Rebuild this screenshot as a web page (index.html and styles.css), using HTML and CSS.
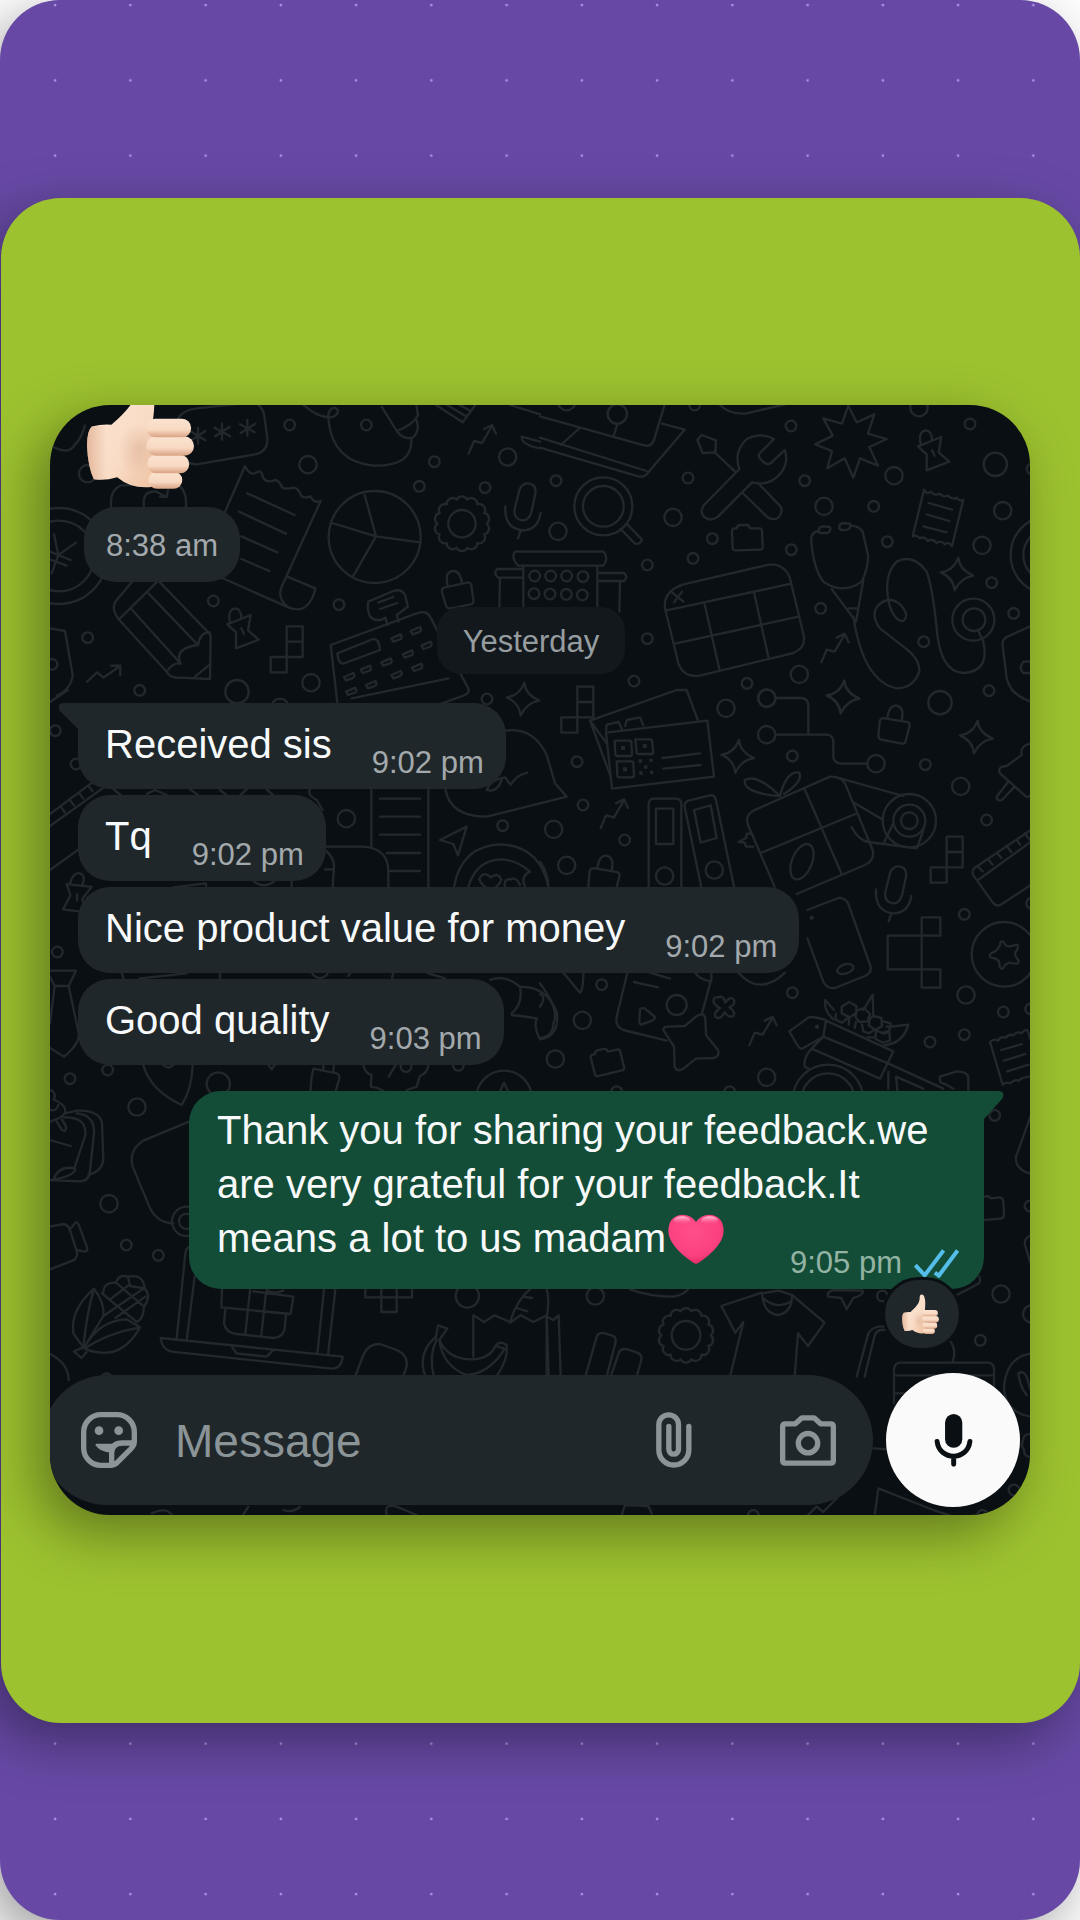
FILE: index.html
```
<!DOCTYPE html>
<html lang="en">
<head>
    <meta charset="UTF-8">
    <meta name="viewport" content="width=device-width, initial-scale=1.0">
    <title>Customer Feedback</title>
    <link rel="stylesheet" href="styles.css">
</head>
<body>
    <div class="stage">
        <!-- Dotted backdrop -->
        <svg class="dots" viewBox="0 0 1080 1920" preserveAspectRatio="xMidYMid slice" aria-hidden="true">
            <defs>
                <pattern id="dotsTop" x="17.5" y="-32.5" width="75.25" height="75.25" patternUnits="userSpaceOnUse"><circle cx="37.6" cy="37.6" r="1.3"/></pattern>
                <pattern id="dotsBottom" x="17.5" y="1706" width="75.25" height="75.25" patternUnits="userSpaceOnUse"><circle cx="37.6" cy="37.6" r="1.3"/></pattern>
            </defs>
            <rect x="40" width="1040" height="180" fill="url(#dotsTop)"/>
            <rect x="40" y="1724" width="1040" height="196" fill="url(#dotsBottom)"/>
        </svg>

        <div class="card">
            <main class="chat">
                <!-- Doodle wallpaper -->
                <svg class="wallpaper" viewBox="0 0 2940 3330" preserveAspectRatio="xMidYMid slice" aria-hidden="true">
                    <defs>
                        <circle id="s" r="16"/>
                        <circle id="m" r="26"/>
                        <circle id="l" r="35"/>
                        <path id="spark" d="M5-48 Q8-12 50 6 Q12 12 -6 50 Q-10 12 -48-4 Q-10-8 5-48Z"/>
                        <path id="trend" d="M-38 44 L-22 6 L2 12 L30-36 M8-30 L32-42 L44-16"/>
                        <path id="lock" d="M-34-14 L38-30 Q46-30 48-22 L54 24 Q56 34 46 36 L-14 48 Q-24 50 -28 40 L-40 0 Q-42-10 -34-14Z M-22-18 Q-34-60 -8-64 Q14-66 20-28"/>
                        <path id="pin" d="M-46-18 L24-46 L16 0 L48 28 L-20 54 L-20 6Z M-38-24 Q-46-64 -22-66 Q-4-64 -4-36 M-4-6 L4 10"/>
                        <path id="pixels" d="M0-70 h48 v92 h-48z M0-24 h48 M-48 22 h48 v46 h-48z"/>
                        <path id="gear" d="M74 0 A18 18 0 0 1 67 32 A18 18 0 0 1 46 58 A18 18 0 0 1 16 72 A18 18 0 0 1 -16 72 A18 18 0 0 1 -46 58 A18 18 0 0 1 -67 32 A18 18 0 0 1 -74 0 A18 18 0 0 1 -67 -32 A18 18 0 0 1 -46 -58 A18 18 0 0 1 -16 -72 A18 18 0 0 1 16 -72 A18 18 0 0 1 46 -58 A18 18 0 0 1 67 -32 A18 18 0 0 1 74 0Z"/>
                        <path id="folder" d="M-44-22 q0-8 8-8 h6 q2-10 10-10 h20 q8 0 10 10 h28 q8 0 8 8 l2 48 q0 8 -8 8 l-74 2 q-8 0-8-8z"/>
                        <path id="mic" d="M-6-78 Q6-96 24-92 Q44-86 40-62 L28-6 Q20 20 0 18 Q-26 14 -22-16 L-10-64Q-8-72 -6-78Z M-50-24 Q-54 44 4 48 Q48 46 56-4 M-4 48 L-12 72"/>
                    </defs>

                    <!-- top left -->
                    <g transform="translate(-30 -30)">
                        <use href="#s" x="749" y="90"/><use href="#s" x="979" y="90"/><use href="#s" x="1183" y="200"/><use href="#s" x="1138" y="274"/><use href="#s" x="1335" y="278"/>
                        <use href="#s" x="520" y="618"/><use href="#s" x="897" y="629"/><use href="#s" x="143" y="728"/><use href="#s" x="299" y="886"/><use href="#s" x="36" y="808"/>
                        <use href="#m" x="804" y="209"/><use href="#m" x="1403" y="186"/><use href="#m" x="813" y="863"/><use href="#m" x="143" y="236"/><use href="#l" x="591" y="890"/>
                        <path d="M30 150 Q80 180 100 155 Q125 130 135 92"/>
                        <path d="M412 75 Q425 45 470 40 L640 22 Q670 30 674 70 L682 130 Q684 170 645 178 L470 208 Q430 206 420 170Z"/>
                        <path d="M474 98 v48 M454 110 l42 26 M496 108 l-42 28 M546 86 v48 M524 98 l46 26 M568 96 l-42 28 M622 74 v48 M600 88 l44 24 M646 86 l-44 28"/>
                        <path d="M215 345 Q205 290 240 272 L400 262 Q445 280 437 340 M312 338 Q305 285 350 290 L378 305 M360 305 L380 306 L384 286"/>
                        <circle cx="57" cy="483" r="144"/><circle cx="57" cy="483" r="106"/>
                        <path d="M42 418 L55 480 L108 443 M55 480 L35 535 M30 470 L92 495 M20 490 L80 512"/>
                        <path d="M615 213 L490 500 Q480 525 560 555 L745 637 Q800 660 822 595 L826 580 L742 545 M615 213 Q630 245 650 232 Q665 222 668 245 Q680 268 706 254 Q722 262 726 278 Q745 284 760 278 Q775 278 784 304 Q800 310 812 304 Q820 325 842 318 L725 575 Q710 610 745 637"/>
                        <path d="M622 295 L764 360 M597 350 L738 416 M604 424 L712 472 M604 492 L688 528"/>
                        <circle cx="1004" cy="426" r="138"/><path d="M974 300 L1008 424 L1140 442 M1008 424 L938 546 M1008 424 L876 384"/>
                        <use href="#gear" x="1266" y="386"/><circle cx="1266" cy="386" r="41"/>
                        <use href="#mic" x="1446" y="358"/>
                        <use href="#trend" x="1324" y="132"/><use href="#trend" transform="translate(194 836) rotate(25)"/>
                        <path d="M785 25 Q840 75 880 65 Q905 50 885 38 Q860 40 866 80 Q880 200 1000 212 Q1120 215 1114 130"/>
                        <path d="M1025 35 L1070 108 Q1120 90 1134 60 L1128 25 M1070 108 Q1090 135 1118 128 Q1140 110 1130 76"/>
                        <path d="M1185 28 L1268 82 L1306 30 M1218 28 L1278 64 M1250 25 L1292 48 M1410 30 L1500 58 M1445 125 L1500 140 M1445 125 Q1445 150 1500 160"/>
                        <use href="#lock" x="1246" y="592"/>
                        <path d="M275 562 L230 615 Q210 640 238 675 L380 830 Q390 850 420 848 L510 852 L512 720 L360 562 M238 672 L352 560 M272 640 L422 806 M326 596 L474 750 M380 830 Q400 800 422 806 Q400 760 474 750 Q480 710 510 712 M466 844 L510 808"/>
                        <use href="#pin" x="608" y="706"/><use href="#pixels" x="740" y="764"/>
                        <path d="M30 700 L75 708 L98 840 Q95 880 50 902"/>
                        <path d="M872 750 L1130 655 Q1160 645 1170 665 L1285 880 Q1290 895 1270 902 L905 1035 Z M892 775 L1000 732 Q1018 732 1020 765 L910 806 Q896 808 892 775Z M935 910 L1226 850 M985 620 L1060 588 Q1085 580 1095 600 L1104 635 L1070 660 L1076 680 M985 620 Q980 640 990 665 Q1010 685 1036 668 L1042 690 M1015 622 L1060 606 M1020 642 L1072 624"/>
                        <path d="M1054 730 l28-12 q8 12 -4 16 l-18 6zM1112 708 l28-12 q8 12 -4 16 l-18 6zM1144 752 l28-12 q8 12 -4 16 l-18 6zM1088 778 l28-12 q8 12 -4 16 l-18 6zM1024 802 l28-12 q8 12 -4 16 l-18 6zM962 824 l28-12 q8 12 -4 16 l-18 6zM912 846 l28-12 q8 12 -4 16 l-18 6zM1116 818 l28-12 q8 12 -4 16 l-18 6zM1054 840 l28-12 q8 12 -4 16 l-18 6zM978 870 l28-12 q8 12 -4 16 l-18 6zM918 890 l28-12 q8 12 -4 16 l-18 6z"/>
                        <path d="M1425 470 H1690 Q1708 488 1690 512 H1435 Q1412 490 1425 470Z M1450 512 V640 M1672 512 V640 M1446 522 H1372 Q1358 535 1375 548 H1446 M1380 548 L1378 640 M1676 534 H1752 Q1766 545 1752 558 H1676 M1740 558 L1738 650"/>
                        <use href="#s" x="1484" y="543"/><use href="#s" x="1532" y="543"/><use href="#s" x="1580" y="543"/><use href="#s" x="1629" y="545"/>
                        <use href="#s" x="1482" y="596"/><use href="#s" x="1530" y="597"/><use href="#s" x="1579" y="598"/><use href="#s" x="1627" y="600"/>
                    </g>

                    <!-- top right -->
                    <g transform="translate(1470 -30)">
                        <use href="#s" x="464" y="30"/><use href="#s" x="753" y="93"/><use href="#s" x="444" y="249"/><use href="#s" x="48" y="257"/><use href="#s" x="794" y="257"/>
                        <use href="#s" x="1290" y="87"/><use href="#s" x="517" y="431"/><use href="#s" x="1001" y="334"/><use href="#s" x="754" y="464"/><use href="#s" x="1042" y="440"/>
                        <use href="#s" x="459" y="490"/><use href="#s" x="322" y="510"/><use href="#s" x="1355" y="563"/><use href="#s" x="842" y="640"/><use href="#s" x="1421" y="655"/>
                        <use href="#s" x="322" y="731"/><use href="#s" x="1151" y="740"/><use href="#s" x="282" y="858"/><use href="#s" x="621" y="865"/><use href="#s" x="1347" y="887"/><use href="#s" x="1476" y="222"/>
                        <use href="#m" x="54" y="409"/><use href="#m" x="399" y="367"/><use href="#m" x="852" y="334"/><use href="#m" x="1062" y="242"/><use href="#m" x="1388" y="347"/>
                        <use href="#m" x="1326" y="451"/><use href="#m" x="778" y="838"/><use href="#m" x="1137" y="38"/><use href="#m" x="80" y="20"/><use href="#m" x="681" y="910"/>
                        <use href="#l" x="1366" y="208"/>
                        <path d="M0 64 L315 152 Q335 155 342 135 L375 25 M0 128 L320 228 M0 158 L295 244 Q315 248 325 232 L434 104 L366 86 M62 150 L118 100 M232 88 L222 120"/>
                        <circle cx="232" cy="57" r="29"/>
                        <path d="M540 30 Q570 60 620 55 L735 28"/>
                        <circle cx="190" cy="334" r="87"/><circle cx="190" cy="334" r="61"/><path d="M242 402 L285 446 Q300 450 306 434 L262 388"/>
                        <path d="M472 135 L485 120 L528 136 L526 172 L488 174Z M526 174 L588 232"/>
                        <path d="M702 132 Q660 110 620 132 Q580 170 598 222 L492 330 Q478 350 492 365 Q510 382 534 365 L636 262 Q690 275 722 235 Q748 200 734 165 L692 205 Q680 210 672 202 Q650 186 660 174Z M654 264 L722 335 Q730 352 715 368 Q698 378 682 366 L608 294"/>
                        <path d="M925 32 L950 82 L1003 58 L984 116 L1040 132 L988 156 L1014 212 L960 190 L940 248 L914 190 L862 220 L876 168 L826 148 L878 122 L850 70 L906 86Z"/>
                        <use href="#pin" x="1180" y="172"/><use href="#folder" x="620" y="430"/>
                        <path d="M1152 284 Q1160 300 1172 290 Q1184 304 1198 296 Q1210 308 1224 302 Q1238 316 1250 308 Q1260 322 1270 314 L1236 454 Q1226 438 1214 448 Q1202 434 1190 444 Q1176 428 1164 438 Q1152 422 1140 430 Q1128 418 1118 424Z M1166 324 L1236 344 M1160 358 L1228 378 M1150 394 L1220 412"/>
                        <path d="M430 568 L690 508 Q735 508 750 550 L792 725 Q795 760 760 774 L480 842 Q430 848 415 805 L375 640 Q368 590 430 568Z M380 646 L754 566 M405 746 L775 665 M494 628 L538 822 M642 592 L686 790 M398 594 l32 26 M426 590 l-24 32"/>
                        <path d="M836 404 Q838 394 850 394 L870 396 Q874 410 862 414 L842 414 Q834 412 836 404Z M898 392 Q902 384 914 384 L930 386 Q934 400 922 404 L906 406 Q896 402 898 392Z"/>
                        <path d="M836 408 Q810 412 814 440 Q820 520 850 560 Q910 600 965 560 Q985 520 984 480 L968 410 Q958 394 934 392 M875 582 L948 680 L970 555 M926 640 L950 640 M940 665 Q970 860 1070 880 Q1120 880 1138 830 Q1140 790 1090 755 L1020 700 Q990 660 1015 630 Q1050 600 1082 630 Q1110 660 1090 678 Q1060 678 1046 620 Q1030 540 1070 500 Q1120 475 1160 530 Q1178 580 1190 700 Q1200 830 1270 834 Q1350 830 1330 740 L1314 706"/>
                        <circle cx="1300" cy="674" r="63"/><circle cx="1302" cy="674" r="34"/>
                        <use href="#spark" x="1250" y="536"/><use href="#trend" x="882" y="758"/><use href="#spark" x="908" y="905"/>
                        <circle cx="1530" cy="480" r="118"/><circle cx="1530" cy="480" r="80"/>
                        <path d="M1480 690 L1400 726 Q1385 735 1388 752 L1400 850 Q1410 890 1450 910 M1480 800 H1450 Q1434 818 1450 834 H1480"/>
                    </g>

                    <!-- middle left -->
                    <g transform="translate(-30 855)">
                        <use href="#s" x="1341" y="27"/><use href="#s" x="46" y="122"/><use href="#s" x="1388" y="407"/><use href="#s" x="52" y="786"/><use href="#s" x="90" y="1166"/><use href="#s" x="203" y="1140"/><use href="#s" x="108" y="222"/><use href="#s" x="1255" y="1126"/>
                        <use href="#m" x="919" y="386"/><use href="#m" x="720" y="52"/><use href="#m" x="840" y="838"/><use href="#l" x="535" y="1182"/>
                        <use href="#spark" x="1448" y="26"/>
                        <path d="M30 36 L84 0 M30 372 L160 275 M30 408 L195 290 M62 350 l12 16 M90 330 l12 16 M118 310 l12 16 M146 288 l12 16 M30 540 L120 475"/>
                        <use href="#pin" transform="translate(112 620) rotate(28)"/>
                        <path d="M30 842 H108 L86 888 H44 L30 860 M44 888 L30 1000 M86 888 L116 1030 Q120 1060 72 1100 L30 1074"/>
                        <path d="M220 297 L260 330 M320 312 L345 300 L380 315 M450 297 L480 320 M540 300 L560 316 M600 316 L620 298 M680 298 L710 325"/>
                        <path d="M810 297 Q800 315 830 330 L848 360 M994 297 V470 M1165 297 V590 M1020 326 H1140 M1020 380 H1140 M1020 434 H1140 M1040 489 H1140 M1045 543 H1140"/>
                        <path d="M855 470 H970 Q1045 475 1045 545 V590 M855 480 Q882 500 882 530 L878 590 M855 538 H880 M755 590 V560 M400 592 L498 580 V592 M640 572 Q670 600 705 572"/>
                        <path d="M1200 450 L1280 410 L1254 496 L1240 462Z"/>
                        <path d="M1395 122 Q1480 110 1520 195 L1545 280 L1580 320 L1340 380 Q1230 380 1216 297 M1340 300 Q1350 270 1395 262 L1412 284 Q1430 255 1462 248 M1340 300 Q1370 310 1385 270"/>
                        <path d="M1242 590 Q1265 465 1385 463 Q1500 470 1525 590 M1285 590 Q1310 508 1385 508 Q1430 510 1470 545 Q1440 560 1455 590 M1318 568 Q1330 540 1352 562 Q1375 545 1384 570 Q1375 590 1355 600 Q1325 590 1318 568 M1395 590 Q1390 566 1412 568 Q1430 560 1440 585"/>
                        <path d="M245 848 L250 865 M300 865 L440 850 M540 848 V865 M925 858 L930 850 M1060 848 L1056 865 M1165 850 L1215 865"/>
                        <path d="M1350 870 Q1395 852 1440 890 Q1520 890 1550 965 Q1560 1040 1500 1048 Q1480 1010 1490 985 Q1460 980 1415 975 M1440 890 Q1450 940 1415 970"/>
                        <path d="M310 1125 Q330 1200 425 1245 Q455 1200 458 1125 M370 1125 Q385 1140 400 1125 M685 1125 L695 1138 L704 1125"/>
                        <path d="M820 1136 L890 1150 Q900 1155 898 1166 L885 1210 M820 1136 Q810 1180 812 1220 M850 1125 V1138 M882 1125 L880 1144"/>
                        <path d="M970 1125 Q975 1150 995 1155 L992 1190 Q1030 1195 1040 1215 M1165 1125 Q1162 1150 1140 1158 L1130 1190 L1100 1200 M1046 1160 L1070 1120"/><use href="#s" x="1098" y="1130"/>
                        <circle cx="1392" cy="1226" r="84"/><path d="M1370 1225 L1392 1178 L1415 1225"/>
                    </g>

                    <!-- middle right -->
                    <g transform="translate(1470 855)">
                        <use href="#s" x="111" y="215"/><use href="#s" x="757" y="198"/><use href="#s" x="1156" y="224"/><use href="#s" x="129" y="345"/><use href="#s" x="254" y="450"/><use href="#s" x="1340" y="390"/>
                        <use href="#s" x="1273" y="673"/><use href="#s" x="185" y="884"/><use href="#s" x="757" y="908"/><use href="#s" x="1390" y="966"/><use href="#s" x="1273" y="1034"/><use href="#s" x="1170" y="1056"/><use href="#s" x="230" y="1205"/><use href="#s" x="569" y="1205"/><use href="#s" x="1472" y="957"/><use href="#s" x="1475" y="640"/>
                        <use href="#m" x="558" y="55"/><use href="#m" x="1262" y="289"/><use href="#m" x="41" y="418"/><use href="#m" x="80" y="526"/><use href="#m" x="1278" y="915"/><use href="#m" x="127" y="991"/><use href="#m" x="46" y="1107"/><use href="#m" x="680" y="1162"/><use href="#l" x="1200" y="38"/>
                        <use href="#pixels" x="112" y="60"/>
                        <path d="M200 160 L150 92 L410 0 L440 0 L474 92 M150 92 L212 260"/>
                        <path d="M198 128 L502 92 L522 260 L216 296Z"/>
                        <path d="M224 152 h44 q6 0 6 6 l2 34 q0 6-6 6 h-38 q-6 0-6-6z M286 148 h44 q6 0 6 6 l4 32 q0 6-6 6 h-38 q-6 0-6-6z M230 214 h44 q6 0 6 6 l2 36 q0 6-6 6 h-38 q-6 0-6-6z M198 122 L200 104 L236 96 L246 118 M256 108 L260 90 L300 82 L310 106 M368 204 L480 190 M370 236 L482 225"/>
                        <path class="solid" d="M243 168 h12 v12 h-12z M308 162 h12 v12 h-12z M249 232 h12 v12 h-12z M296 208 h10 v10 h-10z M328 206 h10 v10 h-10z M312 226 h10 v10 h-10z M298 244 h10 v10 h-10z M330 242 h10 v10 h-10z"/>
                        <use href="#spark" x="592" y="198"/><use href="#spark" x="1308" y="140"/><use href="#spark" x="908" y="20"/>
                        <use href="#m" x="680" y="24"/><use href="#m" x="680" y="134"/><use href="#m" x="1008" y="221"/>
                        <path d="M706 24 H785 Q805 26 805 48 V132 M706 134 H860 Q880 136 880 156 V200 Q882 220 905 221 H982"/>
                        <use href="#lock" transform="translate(1056 110) rotate(22)"/><use href="#lock" transform="translate(186 560) rotate(22)"/>
                        <use href="#trend" x="220" y="370"/><use href="#trend" x="666" y="1022"/>
                        <path d="M326 592 V340 Q328 326 342 326 H410 Q424 328 424 342 V592 M348 356 H400 V462 H348Z M484 592 L434 350 Q432 336 446 332 L510 316 Q524 314 528 330 L582 590 M462 360 L512 346 L530 444 L482 458Z"/>
                        <use href="#m" x="374" y="558"/><use href="#m" x="523" y="540"/>
                        <path d="M720 318 Q610 310 614 270 Q650 250 720 318 Q740 240 778 248 Q790 275 732 312"/>
                        <path d="M640 362 L870 260 Q900 258 915 280 L998 480 Q1005 510 975 525 L770 612 M704 590 L624 405 Q615 375 640 362 M794 298 L904 550 M664 488 L946 372 M632 430 L620 432 L618 444 L596 456 L614 458 L618 470 L640 470"/>
                        <ellipse cx="786" cy="515" rx="30" ry="56" transform="rotate(22 786 515)"/>
                        <circle cx="1108" cy="392" r="80"/><circle cx="1108" cy="392" r="48"/><circle cx="1108" cy="392" r="25"/>
                        <path d="M890 262 L1090 318 M945 340 L1030 390 M935 412 Q955 450 985 456 L1130 475 M1060 400 L1032 458 M1150 420 L1132 472"/>
                        <use href="#mic" x="1058" y="622"/><use href="#pixels" x="1220" y="510"/>
                        <path d="M1145 682 H1201 V737 H1145Z M1145 737 H1043 V838 H1145Z M1145 838 H1201 V893 H1145Z"/>
                        <path d="M802 660 L895 624 Q915 622 925 642 L992 830 Q995 850 975 858 L885 894 Q862 898 850 875 L802 745"/><ellipse cx="916" cy="837" rx="25" ry="14" transform="rotate(-18 916 837)"/><circle cx="815" cy="683" r="3"/>
                        <circle cx="1392" cy="793" r="97"/><path d="M1382 756 Q1390 750 1396 764 Q1400 774 1430 764 Q1438 766 1430 782 Q1418 792 1436 812 Q1438 824 1420 820 Q1400 812 1388 836 Q1378 838 1378 818 Q1376 806 1352 802 Q1344 794 1358 788 Q1378 780 1382 756Z"/>
                        <path d="M1480 415 L1302 535 Q1295 545 1300 556 L1360 640 Q1372 652 1386 642 L1480 580 M1314 570 L1480 450 M1314 530 l14 14 M1344 508 l14 16 M1372 490 l12 14 M1400 468 l14 18 M1430 450 l10 14 M1454 430 l14 18"/>
                        <path d="M1475 160 Q1440 165 1445 195 L1400 228 Q1370 230 1380 250 L1456 318 Q1465 325 1475 312 M1404 276 L1370 320 Q1370 335 1386 330 L1424 290 M1415 0 Q1440 25 1480 38"/>
                        <path d="M0 515 Q25 550 25 592 M70 848 L120 908 Q130 900 130 848 M0 880 Q60 960 40 1000 Q40 1040 0 1044 M0 950 Q20 920 0 912"/>
                        <path d="M595 848 Q660 920 735 848"/>
                        <path d="M262 848 L230 980 Q225 1010 250 1020 L380 1052 M465 848 Q480 870 512 874 L486 970 M514 848 V872 M330 848 L390 866 M282 876 L354 892 M300 958 Q310 950 320 960 L344 980 Q346 988 336 992 L304 1004 Q296 1000 298 990Z"/><circle cx="410" cy="945" r="30"/>
                        <path d="M370 1020 Q370 1008 390 1010 L434 1008 L470 978 Q490 965 496 985 L498 1035 L534 1080 Q540 1100 520 1104 L468 1106 L430 1136 Q410 1148 404 1130 L402 1070Z"/>
                        <path d="M535 922 Q550 915 556 938 Q570 916 582 930 Q586 945 568 952 Q588 966 580 978 Q564 984 554 966 Q542 990 528 982 Q518 970 540 954 Q515 940 522 926 Q528 920 535 922Z"/>
                        <use href="#folder" transform="translate(200 1116) rotate(-12)"/>
                        <path d="M748 1024 L806 982 Q815 978 858 990 L850 1040 L786 1076Q778 1076 770 1062Z M858 992 L1060 1084 L1020 1166 L815 1076 L850 1040 L1044 1120 M815 1076 Q790 1100 794 1130 L806 1136 M1044 1120 L1210 1196 M1068 1160 L1072 1200 M1068 1160 L1150 1196 M1045 1146 V1196"/>
                        <path d="M880 988 Q850 960 856 930 L882 960 M970 960 L998 914 L1000 975 M1040 1010 Q1060 1010 1105 1004 Q1090 1060 1032 1066"/>
                        <path d="M905 950 l22-14 22 12 v20 l-20 14 -24-12z M950 962 l22-8 18 18 -8 22 -24 2 -12-16z M888 972 l-2 16 20 10 18-14 M928 986 l-2 18 M948 996 l-4 18 M1000 978 l24 6 2 24 -20 12 -20-14 4-20z M1030 994 l22 6 -4 22 -22 8 M1008 1022 l24 8 16-4 2 26 -22 6 -22-12z M966 1004 l4 20 18 6 16-12 M1000 1042 l-18 0"/>
                        <circle cx="864" cy="1230" r="106"/><circle cx="864" cy="1230" r="80"/><circle cx="831" cy="1010" r="3"/>
                        <path d="M1350 1056 Q1362 1044 1374 1052 Q1384 1036 1396 1044 Q1408 1030 1420 1036 Q1432 1022 1444 1030 Q1456 1018 1462 1020 L1475 1060 M1350 1056 L1388 1184 Q1400 1174 1410 1180 Q1424 1166 1436 1172 Q1448 1160 1475 1160 M1384 1080 L1446 1062 M1392 1112 L1456 1092 M1402 1144 L1466 1124"/>
                        <path d="M1200 1160 L1250 1144 Q1285 1145 1285 1165 V1200 M1200 1160 Q1195 1180 1215 1182 L1240 1196"/>
                    </g>

                    <!-- lower left -->
                    <g transform="translate(-30 2025)">
                        <use href="#s" x="259" y="495"/><use href="#s" x="355" y="526"/><use href="#m" x="291" y="81"/><use href="#m" x="207" y="371"/><use href="#l" x="1282" y="648"/><use href="#s" x="200" y="896"/>
                        <path d="M30 30 Q50 35 42 60 Q60 65 72 80 Q85 100 55 115 L30 125 M30 90 Q50 95 55 75 M75 100 L110 92 Q180 90 186 130 L190 240 Q185 275 145 284 M72 112 Q140 110 136 165 L104 262 M110 100 Q165 105 162 160 L150 270 Q150 302 120 304 L30 300 M40 300 Q55 255 105 265 Q110 285 40 300 M50 125 L66 150 Q78 158 78 140 L66 118 M30 180 L92 198"/>
                        <path d="M449 124 L310 182 Q265 210 278 260 L328 380 Q350 428 400 430"/><circle cx="440" cy="424" r="44"/><circle cx="440" cy="424" r="23"/>
                        <path d="M30 440 L70 432 Q85 435 90 450 L112 520 Q110 540 90 545 L30 568 M88 450 L106 428 Q112 425 116 434 L142 505 Q142 515 132 515 L112 510"/>
                        <path d="M162 626 Q90 690 100 760 L130 802 Q140 700 162 626 Q195 670 190 708 L134 800 Q180 720 260 718 L300 742 Q200 760 134 806 Q240 850 300 742 M130 802 L102 814 L124 834 L140 816"/>
                        <path d="M190 640 Q190 605 228 608 Q236 582 264 590 Q310 580 314 625 Q335 650 312 680 Q310 720 290 726 M186 640 L290 726 M228 608 L312 680 M264 590 L270 618 L314 625 M190 708 L312 625 M226 714 L316 650 M208 660 L270 612"/>
                        <path d="M30 822 Q85 850 86 900"/>
                        <path d="M449 500 Q438 505 436 520 L410 776 M464 590 L440 780 M362 774 L908 830 Q905 866 875 866 L395 815 Q365 808 362 774Z M852 628 L832 822 M886 628 L864 826 M574 798 L590 820 L680 830 L698 812"/>
                        <path d="M546 630 L544 682 L752 702 L760 650 L640 634 M630 630 L616 762 M678 636 L664 766 M556 686 L552 730 Q558 760 590 762 L700 774 Q730 772 734 745 L738 704 M680 630 Q700 645 730 632"/>
                        <path d="M976 628 V652 H1116 V628 M1024 628 V696 H1070 V628"/>
                        <path d="M1470 628 Q1430 660 1410 726 L1364 706 L1332 726 L1300 706 V830 M1410 728 L1442 706 L1480 726 L1520 706 V890 M1450 650 L1476 654 M1430 684 L1462 694"/>
                        <path d="M946 888 L970 825 Q985 790 1020 792 L1070 810 Q1105 825 1100 860 L1090 888"/>
                        <path d="M1188 770 L1194 736 L1222 746 L1198 780 Q1225 840 1300 838 Q1350 835 1366 798 Q1380 780 1400 795 Q1405 840 1370 888 M1188 770 Q1130 820 1156 890 M1190 778 Q1165 830 1182 890 M1198 782 Q1210 860 1280 885 Q1350 880 1394 806 L1366 798"/>
                    </g>

                    <!-- lower right -->
                    <g transform="translate(1470 2025)">
                        <use href="#s" x="1364" y="106"/><use href="#s" x="1027" y="648"/><use href="#s" x="1321" y="781"/><use href="#m" x="166" y="648"/><use href="#m" x="1383" y="642"/><use href="#s" x="1470" y="378"/><use href="#m" x="1475" y="702"/>
                        <use href="#gear" x="438" y="766"/><circle cx="438" cy="766" r="43"/>
                        <path d="M544 678 L666 638 Q670 700 712 705 Q756 700 756 645 L854 728 L804 798 L774 760 L764 890 M544 678 L586 758 L610 726 L570 890 M666 640 L716 632 L756 645 M670 655 Q710 690 752 665"/>
                        <path d="M136 890 L170 770 Q178 755 195 760 L220 768 Q230 775 226 790 L200 890 M212 890 L238 815 Q246 804 262 808 L292 818 Q308 825 304 840 L290 890"/>
                        <path d="M20 628 Q30 660 20 710 L40 720 L56 706 L62 890 M20 710 L26 890 M270 628 Q330 650 400 650 Q430 645 444 628"/>
                        <path d="M864 650 Q860 635 880 630 L968 632 Q972 645 940 654 L920 688 L904 654Z"/>
                        <path d="M1035 740 Q1000 735 985 760 L950 890 M1035 750 Q1010 745 1003 770 L974 890 M1232 785 Q1250 810 1238 846 M1250 645 L1310 614 Q1325 608 1318 590"/>
                        <path d="M1062 885 V865 Q1065 848 1082 848 H1345 Q1362 850 1362 868 V960 M1062 885 V970 M1064 886 H1362 M1064 940 H1100"/>
                        <path d="M1475 820 Q1400 830 1392 920 Q1395 1000 1475 1010 M1435 880 Q1450 870 1460 890 L1475 940 M1435 880 Q1440 920 1460 945"/>
                        <path d="M1334 350 L1345 348 L1352 355 L1380 352 Q1390 355 1390 366 L1392 405 Q1390 416 1380 416 L1334 420 M1475 100 L1428 230 Q1425 270 1475 282 M1475 465 Q1450 475 1455 495 L1475 560"/>
                        <path d="M1005 1300 L1015 1225 L1180 1290 L1240 1310 M805 1304 L830 1280 L850 1296 L895 1250 M1000 1105 L1040 1108"/><use href="#s" x="1422" y="1230"/><use href="#s" x="640" y="1306"/><use href="#s" x="1328" y="1306"/>
                        <path d="M1475 1062 Q1450 1060 1450 1080 Q1440 1095 1452 1108 Q1450 1130 1475 1132"/>
                        <path d="M-1165 1300 Q-1120 1280 -1105 1305 M-890 1304 L-875 1280 M-770 1290 Q-740 1300 -720 1280 M-460 1304 Q-470 1270 -430 1280 L-370 1305 M245 1305 L255 1275 L325 1278 L335 1300"/>
                    </g>
                </svg>

                <!-- Shared thumbs up drawing -->
                <svg class="defs" width="0" height="0" aria-hidden="true">
                    <defs>
                        <linearGradient id="skin" x1="0" y1="0" x2="1" y2="1">
                            <stop offset="0" stop-color="#fbe6d6"/>
                            <stop offset=".6" stop-color="#f9dcc6"/>
                            <stop offset="1" stop-color="#edbd9b"/>
                        </linearGradient>
                        <linearGradient id="finger" x1="0" y1="0" x2="0" y2="1">
                            <stop offset="0" stop-color="#fbe3d0"/>
                            <stop offset=".6" stop-color="#f8d9c2"/>
                            <stop offset="1" stop-color="#d9a283"/>
                        </linearGradient>
                        <radialGradient id="palm" cx=".5" cy=".5" r=".5">
                            <stop offset="0" stop-color="#d9ab90" stop-opacity=".5"/>
                            <stop offset="1" stop-color="#d9ab90" stop-opacity="0"/>
                        </radialGradient>
                        <linearGradient id="wrist" x1="0" y1="0" x2="1" y2="0">
                            <stop offset="0" stop-color="#d69d7c"/>
                            <stop offset="1" stop-color="#d69d7c" stop-opacity="0"/>
                        </linearGradient>
                        <symbol id="thumb" viewBox="0 0 110 120">
                            <path fill="url(#skin)" d="M53 5 Q58-2 64 4 Q72 16 68 48 L78 60 V104 L66 118 Q45 120 31 108 Q18 112 7 110 Q1 98 0 76 Q0 60 5 56 Q16 53 25 54 Q42 40 49 27 Q53 18 53 5Z"/>
                            <path fill="url(#wrist)" d="M5 56 Q0 60 0 76 Q1 98 7 110 L20 110 V55Z" opacity=".6"/>
                            <ellipse cx="53" cy="80" rx="21" ry="27" fill="url(#palm)"/>
                            <g fill="url(#finger)">
                                <rect x="63" y="102" width="35" height="18" rx="9"/>
                                <rect x="62" y="85" width="43" height="19" rx="9"/>
                                <rect x="61" y="66" width="49" height="20" rx="10"/>
                                <rect x="61" y="48" width="46" height="19" rx="9"/>
                            </g>
                        </symbol>
                    </defs>
                </svg>

                <div class="thread">
                    <svg class="big-thumb" role="img" aria-label="Thumbs up"><use href="#thumb"/></svg>
                    <time class="stamp">8:38 am</time>
                    <div class="day">Yesterday</div>

                    <div class="received">
                        <div class="bubble first"><p>Received sis</p><time>9:02 pm</time></div>
                        <div class="bubble"><p>Tq</p><time>9:02 pm</time></div>
                        <div class="bubble"><p>Nice product value for money</p><time>9:02 pm</time></div>
                        <div class="bubble"><p>Good quality</p><time>9:03 pm</time></div>
                    </div>

                    <div class="sent">
                        <p>Thank you for sharing your feedback.we are very grateful for your feedback.It means a lot to us madam<svg class="heart" viewBox="0 0 168 150" role="img" aria-label="Heart">
                            <defs>
                                <radialGradient id="love" cx=".45" cy=".35" r=".75">
                                    <stop offset="0" stop-color="#ff4f8b"/>
                                    <stop offset=".65" stop-color="#fb4080"/>
                                    <stop offset="1" stop-color="#dc1f56"/>
                                </radialGradient>
                                <linearGradient id="shine" x1="0" y1="0" x2="0" y2="1">
                                    <stop offset="0" stop-color="#ffc0d6"/>
                                    <stop offset="1" stop-color="#ff6a9c" stop-opacity="0"/>
                                </linearGradient>
                            </defs>
                            <path fill="url(#love)" d="M84 24 Q98 2 126 2 Q166 6 167 50 Q166 96 92 146 Q84 152 76 146 Q2 96 1 50 Q2 6 42 2 Q70 2 84 24Z"/>
                            <ellipse cx="42" cy="19" rx="25" ry="12" fill="url(#shine)"/>
                            <ellipse cx="125" cy="19" rx="25" ry="12" fill="url(#shine)"/>
                        </svg><span class="meta">
                            <time>9:05 pm</time>
                            <svg class="ticks" viewBox="0 0 134 86" role="img" aria-label="Read"><path d="M4 48 L32 78 L88 4 M62 70 L74 79 L130 4"/></svg>
                        </span></p>
                        <button class="reaction" type="button" aria-label="Thumbs up reaction"><svg><use href="#thumb"/></svg></button>
                    </div>

                    <!-- Message bar -->
                    <form class="composer">
                        <div class="field">
                            <button type="button" aria-label="Stickers">
                                <svg class="sticker" viewBox="0 0 168 168">
                                    <path d="M60 8 H108 A52 52 0 0 1 160 60 V88 Q160 100 151 109 L109 151 Q100 160 88 160 H60 A52 52 0 0 1 8 108 V60 A52 52 0 0 1 60 8Z M158 93 H124 Q92 93 92 124 V156"/>
                                    <g class="solid"><circle cx="54" cy="56" r="13"/><circle cx="113" cy="56" r="13"/><path d="M46 95 H112 L88 122 Q56 120 44 100 Q43 95 46 95Z"/></g>
                                </svg>
                            </button>
                            <input type="text" placeholder="Message" aria-label="Message">
                            <button type="button" aria-label="Attach">
                                <svg class="clip" viewBox="0 0 107 168"><path d="M98 43 V114 A45 45 0 0 1 8 114 V38 A29 29 0 0 1 67 38 V112 A14 14 0 0 1 38 112 V43"/></svg>
                            </button>
                            <button type="button" aria-label="Camera">
                                <svg class="camera" viewBox="0 0 168 152"><path d="M16 26 H46 L66 8 H102 L122 26 H152 Q160 26 160 34 V136 Q160 144 152 144 H16 Q8 144 8 136 V34 Q8 26 16 26Z"/><circle cx="84" cy="84" r="29"/></svg>
                            </button>
                        </div>
                        <button class="voice" type="button" aria-label="Record voice message">
                            <svg viewBox="0 0 117 160"><rect class="solid" x="33" width="52" height="102" rx="26"/><path d="M9 83 C16 142 101 142 108 83 M59 128 V152"/></svg>
                        </button>
                    </form>
                </div>
            </main>
        </div>
    </div>
</body>
</html>
```
FILE: styles.css
```
* {
    box-sizing: border-box;
}
body {
    margin: 0;
    background-color: #fff;
    font-family: "Liberation Sans", Arial, sans-serif;
    color: #f7f9fa;
}
p {
    margin: 0;
}
button {
    display: block;
    padding: 0;
    border: none;
    background: none;
    cursor: pointer;
}
svg {
    display: block;
}
.stage {
    position: relative;
    min-height: 100vh;
    padding: 198px 0 197px 1px;
    border-radius: 60px;
    overflow: hidden;
    background-color: #6749a5;
}
.stage,
.card,
.chat {
    box-shadow: -14px 18px 56px rgba(0, 0, 0, 0.38);
}
.dots {
    position: absolute;
    top: 0;
    left: 0;
    width: 100%;
    height: 100%;
    fill: #b195ea;
}
.card {
    position: relative;
    padding: 207px 50px 208px 49px;
    border-radius: 60px;
    background-color: #9dc22f;
}
.chat {
    position: relative;
    overflow: hidden;
    border-radius: 60px;
    background-color: #0a0f13;
}
.wallpaper {
    position: absolute;
    top: 0;
    left: 0;
    width: 100%;
    height: 100%;
    fill: none;
    stroke: #22282c;
    stroke-width: 7;
    stroke-linecap: round;
    stroke-linejoin: round;
}
.wallpaper .solid {
    fill: #22282c;
    stroke: none;
}
.defs {
    position: absolute;
}
.thread {
    position: relative;
    display: flex;
    flex-direction: column;
    margin: 0 10px 0 -8px;
    padding-bottom: 8px;
}
.big-thumb {
    width: 107px;
    height: 117px;
    margin: -33px 0 0 45px;
}
time {
    font-size: 31px;
    line-height: 36px;
    color: #a3a9ac;
    white-space: nowrap;
}
.stamp {
    align-self: flex-start;
    margin: 18px 0 0 42px;
    padding: 21px 22px 18px;
    border-radius: 32px;
    background-color: #1f272a;
}
.day {
    align-self: center;
    margin-top: 25px;
    padding: 17px 26px 14px;
    border-radius: 24px;
    background-color: #12181b;
    color: #969da0;
    font-size: 31px;
    line-height: 36px;
}

/* Messages */
.received {
    display: flex;
    flex-direction: column;
    align-items: flex-start;
    gap: 6px;
    margin: 29px 36px 0;
}
.bubble {
    position: relative;
    display: flex;
    align-items: flex-end;
    gap: 40px;
    padding: 16px 22px 8px 27px;
    border-radius: 32px;
    background-color: #1f272a;
}
.bubble p {
    padding-bottom: 12px;
    font-size: 40px;
    line-height: 50px;
}
.bubble.first {
    border-top-left-radius: 0;
}
.bubble.first::before {
    content: "";
    position: absolute;
    top: 0;
    left: -20px;
    width: 40px;
    height: 26px;
    background-color: #1f272a;
    clip-path: path("M6 0 H40 V26 H20 L2 8 Q-2 0 6 0Z");
}
.sent {
    position: relative;
    align-self: flex-end;
    max-width: 795px;
    margin: 26px 36px 0;
    padding: 12px 25px 8px 28px;
    border-radius: 32px 0 32px 32px;
    background-color: #144d37;
}
.sent::before {
    content: "";
    position: absolute;
    top: 0;
    right: -20px;
    width: 40px;
    height: 28px;
    background-color: #144d37;
    clip-path: path("M34 0 H0 V28 H20 L38 8 Q42 0 34 0Z");
}
.sent p {
    display: flow-root;
    font-size: 40px;
    line-height: 54px;
}
.heart {
    display: inline-block;
    width: 56px;
    height: 50px;
    margin: -10px 0 -10px 2px;
    vertical-align: -2px;
}
.meta {
    float: right;
    display: flex;
    align-items: center;
    gap: 12px;
    margin-top: 34px;
}
.meta time {
    color: #93b3a4;
}
.ticks {
    width: 45px;
    height: 29px;
    fill: none;
    stroke: #55bde9;
    stroke-width: 12;
}
.reaction {
    position: absolute;
    right: 22px;
    bottom: -62px;
    display: flex;
    justify-content: center;
    align-items: center;
    width: 80px;
    height: 74px;
    padding-right: 4px;
    border: 3px solid #0a0f13;
    border-radius: 37px;
    background-color: #1f272a;
}
.reaction svg {
    width: 37px;
    height: 40px;
}

/* Message bar */
.composer {
    display: flex;
    align-items: center;
    gap: 13px;
    margin-top: 84px;
}
.field {
    flex: 1;
    display: flex;
    align-items: center;
    min-width: 0;
    height: 130px;
    padding: 0 37px 0 39px;
    border-radius: 65px;
    background-color: #1f272a;
}
.field input {
    flex: 1;
    min-width: 0;
    margin-left: 38px;
    padding: 2px 0 0;
    border: none;
    outline: none;
    background: none;
    color: #f7f9fa;
    font-family: inherit;
    font-size: 46px;
    line-height: 56px;
}
.field input::placeholder {
    color: #8b9497;
    opacity: 1;
}
.field svg {
    fill: none;
    stroke: #8b9497;
    stroke-width: 16;
    stroke-linecap: round;
    stroke-linejoin: round;
}
.field .solid {
    fill: #8b9497;
    stroke: none;
}
.sticker {
    width: 56px;
    height: 56px;
}
.clip {
    width: 36px;
    height: 56px;
    margin-right: 88px;
}
.camera {
    width: 56px;
    height: 51px;
}
.voice {
    display: flex;
    justify-content: center;
    align-items: center;
    width: 134px;
    height: 134px;
    border-radius: 50%;
    background-color: #fafafa;
}
.voice svg {
    width: 39px;
    height: 53px;
    fill: none;
    stroke: #0a0f13;
    stroke-width: 15;
    stroke-linecap: round;
}
.voice .solid {
    fill: #0a0f13;
    stroke: none;
}
```
